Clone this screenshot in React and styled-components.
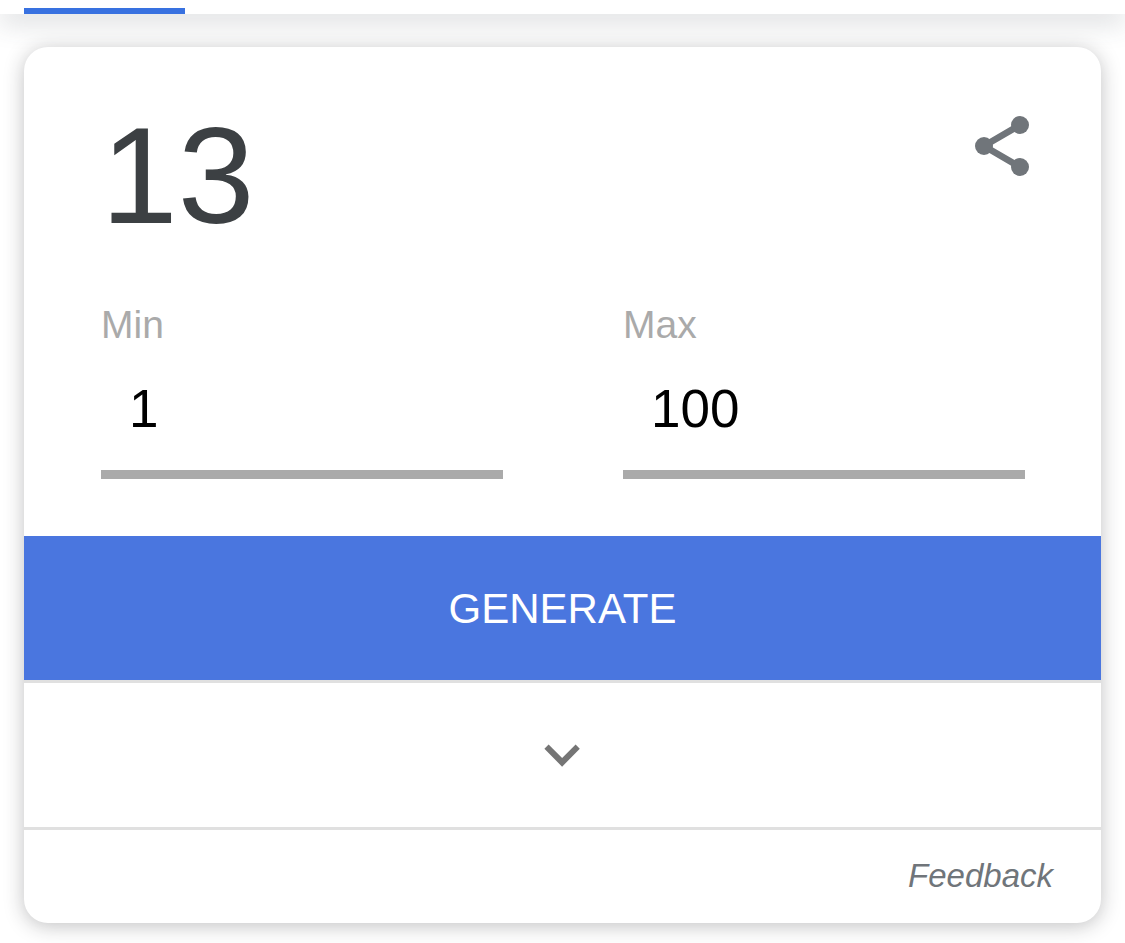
import React, { useState } from "react";
import styled, { createGlobalStyle } from "styled-components";

const GlobalStyle = createGlobalStyle`
  *, *::before, *::after { box-sizing: border-box; }
  body {
    margin: 0;
    background: #fff;
    font-family: "Liberation Sans", Arial, sans-serif;
  }
`;

const Page = styled.div`
  display: flex;
  flex-direction: column;
  gap: 33px;
  padding-bottom: 20px;
`;

const TabBar = styled.nav`
  display: flex;
  align-items: flex-end;
  height: 14px;
  padding: 0 24px;
  background: #fff;
  box-shadow: 0 6px 28px rgba(60, 68, 80, 0.28);
`;

const ActiveTab = styled.span`
  width: 161px;
  height: 6px;
  background: #3871e0;
`;

const Card = styled.main`
  margin: 0 24px;
  border-radius: 24px;
  overflow: hidden;
  background: #fff;
  box-shadow: 0 3px 20px rgba(32, 33, 36, 0.28);
`;

const Header = styled.header`
  display: flex;
  justify-content: space-between;
  align-items: flex-start;
  padding: 48px 63px 0 77px;
`;

const Result = styled.output`
  color: #3c4043;
  font-size: 138px;
  line-height: 160px;
`;

const IconButton = styled.button`
  display: flex;
  margin-top: 15px;
  padding: 0;
  border: 0;
  background: none;
  color: #70757a;
  cursor: pointer;
`;

const Fields = styled.div`
  display: grid;
  grid-template-columns: 1fr 1fr;
  gap: 120px;
  padding: 48px 76px 57px 77px;
`;

const Field = styled.label`
  display: flex;
  flex-direction: column;
  gap: 20px;
  color: #aaa;
  font-size: 39px;
  line-height: 44px;
`;

const NumberInput = styled.input`
  width: 100%;
  height: 112px;
  padding: 0 28px 20px;
  border: 0;
  border-bottom: 9px solid #aaa;
  border-radius: 0;
  outline: 0;
  background: none;
  color: #000;
  font: 53px "Liberation Sans", Arial, sans-serif;
`;

const GenerateButton = styled.button`
  display: block;
  width: 100%;
  height: 144px;
  padding: 2px 0 0;
  border: 0;
  background: #4a76df;
  color: #fff;
  font: 42px "Liberation Sans", Arial, sans-serif;
  text-transform: uppercase;
  cursor: pointer;
`;

const ExpandButton = styled.button`
  display: flex;
  align-items: center;
  justify-content: center;
  width: 100%;
  height: 147px;
  padding: 0;
  border: 0;
  border-top: 3px solid #e0e0e0;
  background: none;
  color: #757575;
  cursor: pointer;
`;

const Footer = styled.footer`
  display: flex;
  justify-content: flex-end;
  align-items: center;
  height: 96px;
  padding: 0 48px 2px;
  border-top: 3px solid #e0e0e0;
`;

const FeedbackLink = styled.a`
  color: #70757a;
  font-size: 33px;
  line-height: 38px;
  font-style: italic;
  text-decoration: none;
`;

function ShareIcon() {
  return (
    <svg width="72" height="72" viewBox="0 0 24 24" fill="currentColor" aria-hidden="true">
      <path d="M18 5L6 12l12 7" fill="none" stroke="currentColor" strokeWidth="2.2" />
      <circle cx="18" cy="5" r="3" />
      <circle cx="6" cy="12" r="3" />
      <circle cx="18" cy="19" r="3" />
    </svg>
  );
}

function ChevronIcon() {
  return (
    <svg width="72" height="72" viewBox="0 0 24 24" fill="currentColor" aria-hidden="true">
      <path d="M7.2 8.5L11.7 13l4.5-4.5L17.6 9.9l-5.9 6-5.9-6z" />
    </svg>
  );
}

export default function App() {
  const [result, setResult] = useState(13);
  const [min, setMin] = useState("1");
  const [max, setMax] = useState("100");

  const generate = () => {
    const low = Number(min);
    const high = Number(max);
    if (high >= low) setResult(low + Math.floor(Math.random() * (high - low + 1)));
  };

  return (
    <>
      <GlobalStyle />
      <Page>
        <TabBar>
          <ActiveTab />
        </TabBar>
        <Card>
          <Header>
            <Result>{result}</Result>
            <IconButton type="button" aria-label="Share">
              <ShareIcon />
            </IconButton>
          </Header>
          <Fields>
            <Field>
              Min
              <NumberInput inputMode="numeric" value={min} onChange={(e) => setMin(e.target.value)} />
            </Field>
            <Field>
              Max
              <NumberInput inputMode="numeric" value={max} onChange={(e) => setMax(e.target.value)} />
            </Field>
          </Fields>
          <GenerateButton type="button" onClick={generate}>Generate</GenerateButton>
          <ExpandButton type="button" aria-label="Show more">
            <ChevronIcon />
          </ExpandButton>
          <Footer>
            <FeedbackLink href="#feedback">Feedback</FeedbackLink>
          </Footer>
        </Card>
      </Page>
    </>
  );
}
